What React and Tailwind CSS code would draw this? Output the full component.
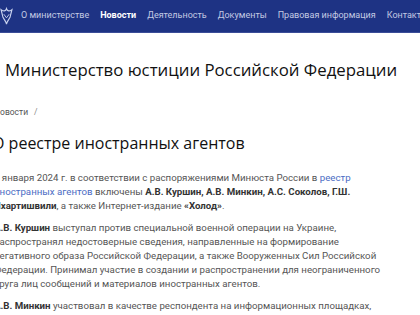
export default function App() {
  const navItems = [
    { t: "О министерстве", b: false },
    { t: "Новости", b: true },
    { t: "Деятельность", b: false },
    { t: "Документы", b: false },
    { t: "Правовая информация", b: false },
    { t: "Контакты", b: false },
    { t: "Обращения", b: false },
  ];
  const head = { fontFamily: "'Open Sans', sans-serif" };
  return (
    <div className="w-[420px] h-[315px] overflow-hidden bg-white" style={{ fontFamily: "Roboto, 'Liberation Sans', sans-serif" }}>
      <div className="h-[33px] bg-[#1e3384] border-b border-[#3b4d98] flex items-center whitespace-nowrap">
        <svg width="15" height="20" viewBox="0 0 16 22" className="ml-[-1px] shrink-0">
          <path d="M2 4 C5 6 7 6 8 3 C9 6 11 6 14 4 L12 12 C10 16 8 18 8 20 C8 18 6 16 4 12 Z" fill="none" stroke="#c9d2ee" strokeWidth="1.3" />
          <path d="M5 9 L8 13 L11 9" fill="none" stroke="#c9d2ee" strokeWidth="1" />
        </svg>
        <div className="flex items-center gap-[11px] ml-[7px] text-[9px] text-[#c3cae3]">
          {navItems.map((n) => (
            <span key={n.t} className={n.b ? "font-bold text-white" : ""}>{n.t}</span>
          ))}
        </div>
      </div>
      <div className="ml-[-6px]">
        <div className="pl-[11px] pt-[25px] text-[16.8px] leading-[23px] text-[#111] whitespace-nowrap" style={head}>
          Министерство юстиции Российской Федерации
        </div>
        <div className="mt-[25px] text-[8.5px] leading-[12px] text-[#555] flex gap-[6px]">
          <span>Новости</span><span className="text-[#888]">/</span>
        </div>
        <h1 className="mt-[14px] ml-[-2px] text-[16px] leading-[22px] text-[#111] whitespace-nowrap" style={head}>
          О реестре иностранных агентов
        </h1>
        <div className="mt-[17px] text-[9.7px] leading-[14px] text-[#555] w-[398px]">
          <p>
            2 января 2024 г. в соответствии с распоряжениями Минюста России в <span className="text-[#4c6cc4]">реестр иностранных агентов</span> включены <b className="text-[#333]">А.В. Куршин, А.В. Минкин, А.С. Соколов, Г.Ш. Чхартишвили</b>, а также Интернет-издание <b className="text-[#333]">«Холод»</b>.
          </p>
          <p className="mt-[8px]">
            <b className="text-[#333]">А.В. Куршин</b> выступал против специальной военной операции на Украине, распространял недостоверные сведения, направленные на формирование негативного образа Российской Федерации, а также Вооруженных Сил Российской Федерации. Принимал участие в создании и распространении для неограниченного круга лиц сообщений и материалов иностранных агентов.
          </p>
          <p className="mt-[8px]">
            <b className="text-[#333]">А.В. Минкин</b> участвовал в качестве респондента на информационных площадках, созданных иностранными агентами и иностранными СМИ, распространял
          </p>
        </div>
      </div>
    </div>
  );
}
